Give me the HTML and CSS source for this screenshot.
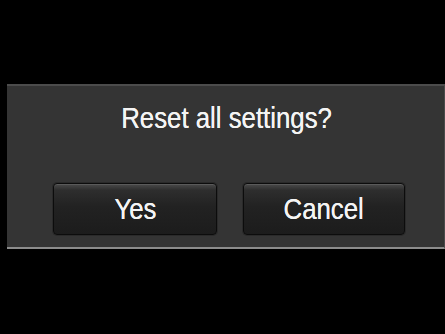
FILE: index.html
```html
<!DOCTYPE html>
<html>
<head>
<meta charset="utf-8">
<link rel="stylesheet" href="styles.css">
</head>
<body>
<div class="screen">
  <div class="dialog">
    <div class="title"><span class="label">Reset all settings?</span></div>
    <div class="buttons">
      <div class="btn btn-yes"><span class="label">Yes</span></div>
      <div class="btn btn-cancel"><span class="label">Cancel</span></div>
    </div>
  </div>
</div>
</body>
</html>
```
FILE: styles.css
```css
html, body {
  margin: 0;
  padding: 0;
  background: #000;
}
.screen {
  width: 445px;
  height: 334px;
  background: #000;
  padding-top: 84px;
  box-sizing: border-box;
}
.dialog {
  margin-left: 7px;
  height: 165px;
  box-sizing: border-box;
  background: #343434;
  border-top: 2px solid #4c4c4c;
  border-bottom: 2px solid #8c8c8c;
  border-right: 1px solid #4a4a4a;
  padding-top: 15px;
  font-family: "Liberation Sans", Arial, sans-serif;
  color: #f4f4f4;
}
.label {
  display: inline-block;
  transform: scaleX(0.86);
  text-shadow: 0 0 0.6px #fff;
}
.title {
  font-size: 30px;
  line-height: 34px;
  text-align: center;
  padding-left: 2px;
}
.buttons {
  display: flex;
  gap: 26px;
  margin-top: 48px;
  padding-left: 46px;
}
.btn {
  height: 52px;
  box-sizing: border-box;
  border: 1px solid #0c0c0c;
  border-radius: 4px;
  background: linear-gradient(to bottom, #4a4a4a 0%, #2e2e2e 12%, #222 45%, #1c1c1c 100%);
  box-shadow: inset 0 1px 0 #5a5a5a, 0 0 0 1px #2a2a2a;
  font-size: 30px;
  line-height: 50px;
  text-align: center;
}
.btn-yes { width: 164px; }
.btn-cancel { width: 162px; }
```
